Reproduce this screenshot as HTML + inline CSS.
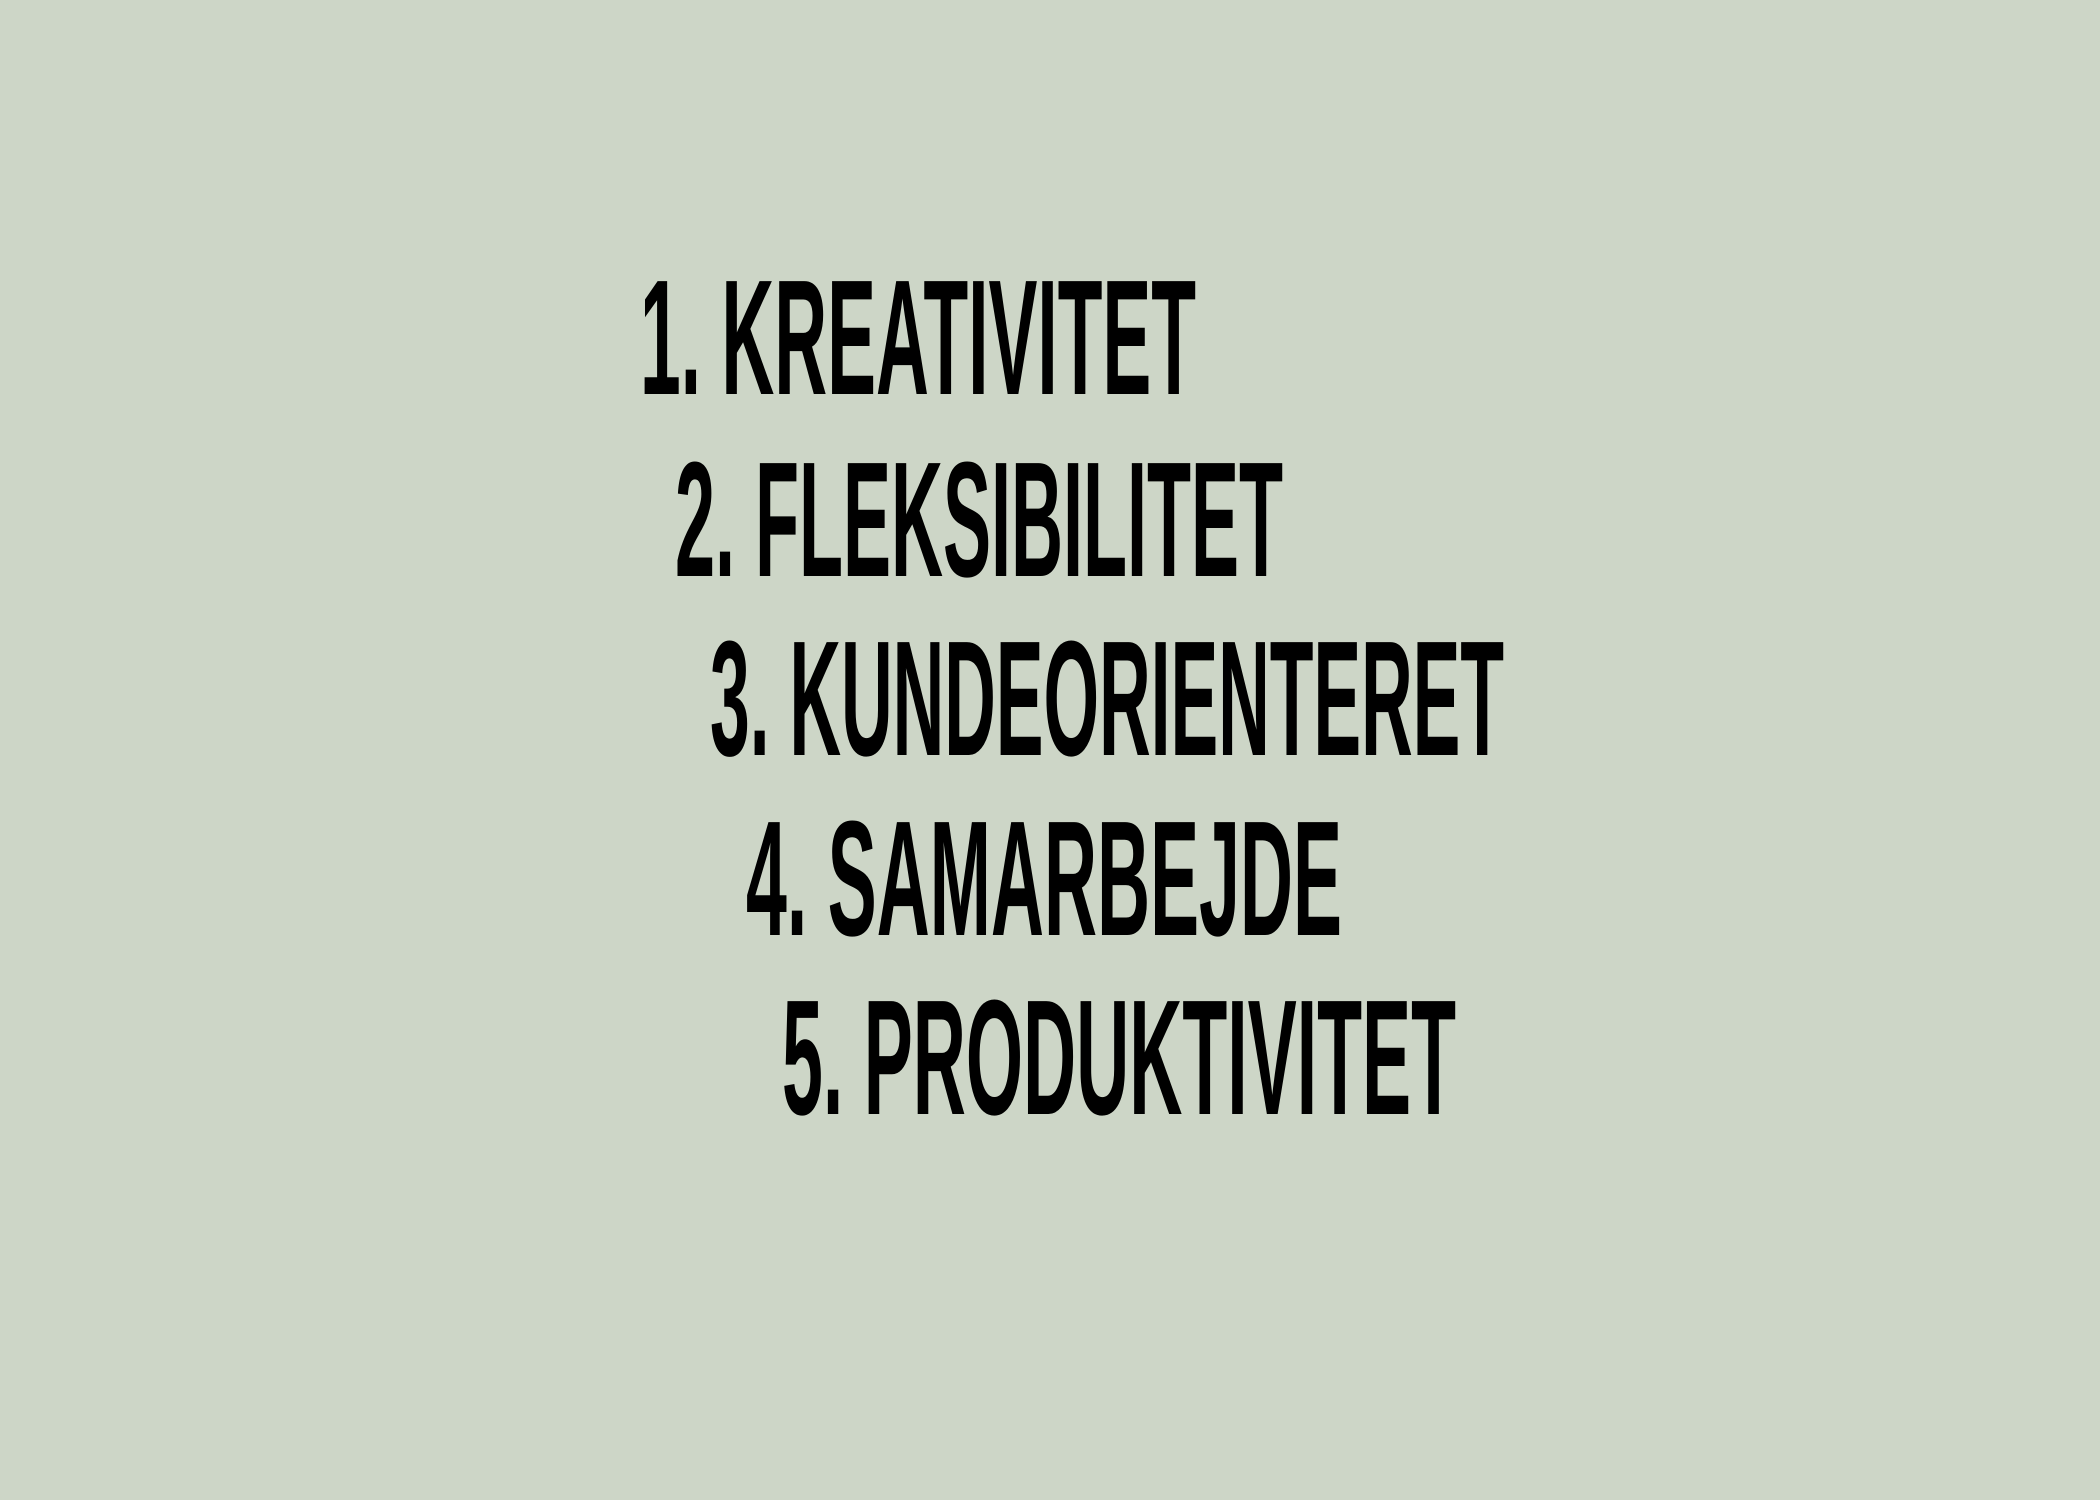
<!DOCTYPE html>
<html>
<head>
<meta charset="utf-8">
<style>
html,body{margin:0;padding:0;background:#cdd6c7;}
svg{display:block;}
</style>
</head>
<body>
<svg width="2100" height="1500" viewBox="0 0 2100 1500" xmlns="http://www.w3.org/2000/svg">
<rect width="2100" height="1500" fill="#cdd6c7"/>
<g font-family="'Liberation Sans Narrow','Liberation Sans',sans-serif" font-weight="bold" font-size="164" fill="#000">
<text x="640" y="394" textLength="556" lengthAdjust="spacingAndGlyphs">1. KREATIVITET</text>
<text x="675" y="576" textLength="608" lengthAdjust="spacingAndGlyphs">2. FLEKSIBILITET</text>
<text x="710" y="755" textLength="794" lengthAdjust="spacingAndGlyphs">3. KUNDEORIENTERET</text>
<text x="746" y="935" textLength="596" lengthAdjust="spacingAndGlyphs">4. SAMARBEJDE</text>
<text x="782" y="1114" textLength="674" lengthAdjust="spacingAndGlyphs">5. PRODUKTIVITET</text>
</g>
</svg>
</body>
</html>
